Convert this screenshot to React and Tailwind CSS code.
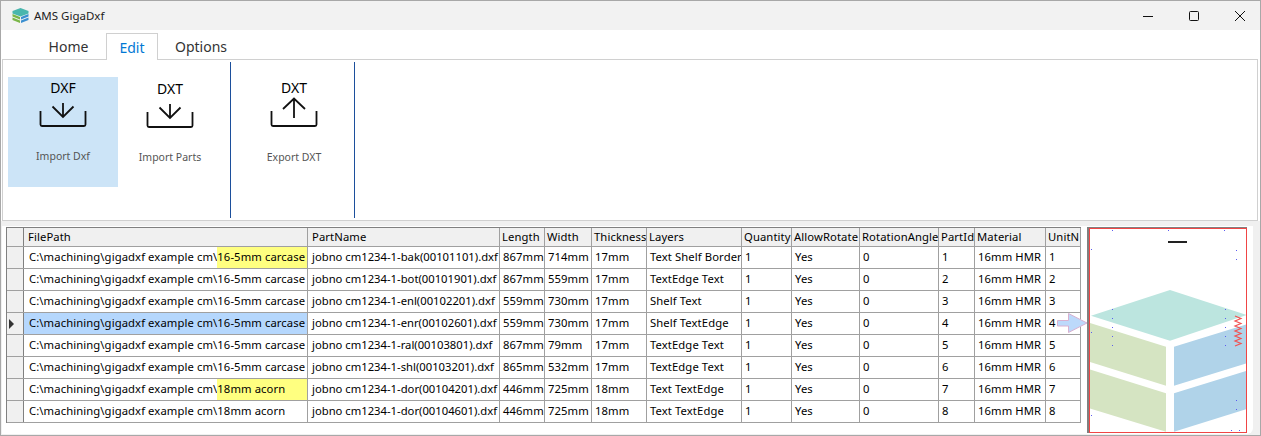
const COLS = [
  { key: 'path', label: 'FilePath', w: 'w-[284px]', pad: 'px-[4px]' },
  { key: 'name', label: 'PartName', w: 'w-[192px]', pad: 'px-[4px]' },
  { key: 'len', label: 'Length', w: 'w-[45px]' },
  { key: 'wid', label: 'Width', w: 'w-[47px]' },
  { key: 'thk', label: 'Thickness', w: 'w-[55px]' },
  { key: 'lay', label: 'Layers', w: 'w-[95px]' },
  { key: 'qty', label: 'Quantity', w: 'w-[50px]' },
  { key: 'rot', label: 'AllowRotate', w: 'w-[68px]' },
  { key: 'ang', label: 'RotationAngle', w: 'w-[79px]' },
  { key: 'pid', label: 'PartId', w: 'w-[36px]' },
  { key: 'mat', label: 'Material', w: 'w-[71px]' },
  { key: 'unit', label: 'UnitN', w: 'w-[35px]' },
];

const PREFIX = 'C:\\machining\\gigadxf example cm\\';

const ROWS = [
  { dir: '16-5mm carcase', mark: true, name: 'bak(00101101)', len: 867, wid: 714, thk: 17, lay: 'Text Shelf Border' },
  { dir: '16-5mm carcase', name: 'bot(00101901)', len: 867, wid: 559, thk: 17, lay: 'TextEdge Text' },
  { dir: '16-5mm carcase', name: 'enl(00102201)', len: 559, wid: 730, thk: 17, lay: 'Shelf Text' },
  { dir: '16-5mm carcase', sel: true, name: 'enr(00102601)', len: 559, wid: 730, thk: 17, lay: 'Shelf TextEdge' },
  { dir: '16-5mm carcase', name: 'ral(00103801)', len: 867, wid: 79, thk: 17, lay: 'TextEdge Text' },
  { dir: '16-5mm carcase', name: 'shl(00103201)', len: 865, wid: 532, thk: 17, lay: 'TextEdge Text' },
  { dir: '18mm acorn', mark: true, name: 'dor(00104201)', len: 446, wid: 725, thk: 18, lay: 'Text TextEdge' },
  { dir: '18mm acorn', name: 'dor(00104601)', len: 446, wid: 725, thk: 18, lay: 'Text TextEdge' },
];

// blue anchor points on the sheet preview, in page pixels
const DOTS = [
  [1112, 230], [1168, 230], [1224, 230], [1091, 249], [1236, 250], [1236, 259],
  [1112, 309], [1112, 318], [1112, 327], [1112, 336], [1112, 345],
  [1225, 309], [1225, 318], [1225, 327], [1225, 336], [1225, 345],
  [1091, 332], [1236, 400], [1236, 409], [1091, 415], [1231, 430], [1239, 430],
];

function TrayIcon({ label, up }) {
  return (
    <div className="flex flex-col items-center">
      <span className="text-[14px] leading-[16px] text-black">{label}</span>
      <svg className="block" width="48" height="32" viewBox="0 0 48 32" fill="none" stroke="#111" strokeWidth="1.8">
        <path d="M1.500 15v13.500a1.500 1.500 0 0 0 1.500 1.500h42a1.500 1.500 0 0 0 1.500-1.500V15" />
        {up ? <path d="M24 22V3M13 13L24 2.500 35 13" /> : <path d="M24 7v14M13.500 10.500L24 21l10.500-10.500" />}
      </svg>
    </div>
  );
}

function RibbonButton({ label, icon, up, active, w, box = 'pt-[3px]', gap = 'mt-[21px]' }) {
  return (
    <div className={`${w} ${box} h-[110px] flex flex-col items-center ${active ? 'bg-[#cce4f7]' : ''}`}>
      <TrayIcon label={icon} up={up} />
      <span className={`${gap} text-[10.5px] leading-[14px] text-[#555]`}>{label}</span>
    </div>
  );
}

function Cell({ w, pad = 'px-[3px]', children }) {
  return (
    <div className={`${w} ${pad} shrink-0 h-full border-r border-[#a0a0a0] flex items-center overflow-hidden whitespace-nowrap`}>
      {children}
    </div>
  );
}

function PathCell({ row }) {
  const bg = row.sel ? 'bg-[#b5d7fd]' : '';
  return (
    <div className={`w-[284px] shrink-0 h-full border-r border-[#a0a0a0] flex whitespace-nowrap ${bg}`}>
      <span className="pl-[5px] flex items-center">{PREFIX}</span>
      <span className={`flex-1 flex items-center ${row.mark ? 'bg-[#ffff80]' : ''}`}>{row.dir}</span>
    </div>
  );
}

function PreviewPanel() {
  return (
    <svg className="block" width="156" height="203" viewBox="1090 229 156 203">
      <polygon points="1091,315.700 1170,290 1247,315 1170,340.700" fill="#bce5df" />
      <polygon points="1089,322.700 1166,346.700 1166,385.700 1089,361.700" fill="#d5e4c2" />
      <polygon points="1089,369.300 1166,393.300 1166,431.700 1089,408.300" fill="#d5e4c2" />
      <polygon points="1174,346.700 1247,324.300 1247,363.300 1174,385.700" fill="#b0d3e9" />
      <polygon points="1174,393.300 1247,370.700 1247,409 1174,431.700" fill="#b0d3e9" />
      <path d="M1235 316l6 2.500-6 2.500 6 2.500-6 2.500 6 2.500-6 2.500 6 2.500-6 2.500 6 2.500-6 2.500 6 2.500-6 2.500" fill="none" stroke="#f25050" strokeWidth="1.200" />
      <rect x="1168" y="241" width="19" height="2" fill="#222" />
      {DOTS.map(([x, y]) => (
        <rect key={`${x}-${y}`} x={x} y={y} width="1" height="1" fill="#5c5cf0" />
      ))}
    </svg>
  );
}

export default function App() {
  return (
    <div className="w-[1261px] h-[436px] bg-[#f0f0f0] border border-[#a8a8a8] flex flex-col overflow-hidden font-['Noto_Sans',sans-serif] text-[11.25px] text-black">
      <div className="h-[29px] shrink-0 bg-[#f2f2f2] flex items-center pl-[11px]">
        <svg width="17" height="15" viewBox="0 0 17 15">
          <path d="M8.500 0L16.500 3v2.500L8.500 8.500.5 5.500V3z" fill="#49b6ad" />
          <path d="M.5 6l7.500 3v2.500L.5 8.500z" fill="#7ab648" />
          <path d="M16.500 6L9 9v2.500l7.500-3z" fill="#3b8fd0" />
          <path d="M.5 9.500l7.500 3V15L.5 12z" fill="#7ab648" />
          <path d="M16.500 9.500L9 12.500V15l7.500-3z" fill="#3b8fd0" />
        </svg>
        <span className="ml-[5px] text-[11.5px] text-[#222]">AMS GigaDxf</span>
        <div className="ml-auto flex items-center mr-[15px] gap-[36px]">
          <svg width="10" height="10" viewBox="0 0 10 10" stroke="#111" fill="none">
            <path d="M0 5.500h10" />
          </svg>
          <svg width="10" height="10" viewBox="0 0 10 10" stroke="#111" fill="none">
            <rect x=".5" y=".5" width="9" height="9" rx="1" />
          </svg>
          <svg width="10" height="10" viewBox="0 0 10 10" stroke="#111" fill="none">
            <path d="M0 0l10 10M10 0L0 10" />
          </svg>
        </div>
      </div>

      <div className="bg-white flex flex-col h-[191px] shrink-0 pl-[1px]">
        <div className="h-[29px] shrink-0 flex items-end pl-[29px] text-[14px] text-[#333]">
          <div className="w-[75px] h-[26px] flex items-center justify-center">Home</div>
          <div className="w-[52px] h-[27px] border border-b-0 border-[#d0d0d0] flex items-center justify-center text-[#0078d4] bg-white relative -mb-px z-10">Edit</div>
          <div className="w-[68px] ml-[9px] h-[26px] flex items-center justify-center">Options</div>
        </div>
        <div className="h-[162px] mr-[2px] border border-[#d0d0d0] flex pl-[5px] pt-[2px]">
          <div className="flex pt-[15px]">
            <RibbonButton label="Import Dxf" icon="DXF" active w="w-[110px]" />
            <RibbonButton label="Import Parts" icon="DXT" w="w-[104px]" box="pt-[4px]" />
          </div>
          <div className="w-px h-[156px] bg-[#1c4f9c] ml-[8px]" />
          <div className="flex pt-[15px]">
            <RibbonButton label="Export DXT" icon="DXT" up w="w-[123px]" box="pt-[3px] pl-[3px]" gap="mt-[22px]" />
          </div>
          <div className="w-px h-[156px] bg-[#1c4f9c]" />
        </div>
      </div>

      <div className="h-[5px] shrink-0 bg-[#f0f0f0]" />

      <div className="flex-1 bg-white ml-[1px] mr-[7px] mb-[1px] rounded-br-md flex items-start pl-[4px] pt-[1px]">
        <div className="w-fit border-t border-l border-[#808080] tracking-[0.1px]">
          <div className="flex h-[19px] bg-[#f0f0f0] border-b border-[#a0a0a0]">
            <div className="w-[17px] shrink-0 border-r border-[#808080]" />
            {COLS.map((c) => (
              <Cell key={c.key} w={c.w} pad={c.pad || 'px-[2px]'}>{c.label}</Cell>
            ))}
          </div>
          {ROWS.map((r, i) => (
            <div key={i} className="flex h-[22px] border-b border-[#a0a0a0]">
              <div className="w-[17px] shrink-0 bg-[#f0f0f0] border-r border-[#808080] flex items-center pl-[2px]">
                {r.sel && <div className="w-0 h-0 border-y-[5px] border-y-transparent border-l-[5px] border-l-[#333]" />}
              </div>
              <PathCell row={r} />
              <Cell w="w-[192px]" pad="px-[4px] tracking-normal">jobno cm1234-1-{r.name}.dxf</Cell>
              <Cell w="w-[45px]">{r.len}mm</Cell>
              <Cell w="w-[47px]">{r.wid}mm</Cell>
              <Cell w="w-[55px]">{r.thk}mm</Cell>
              <Cell w="w-[95px]">{r.lay}</Cell>
              <Cell w="w-[50px]">1</Cell>
              <Cell w="w-[68px]">Yes</Cell>
              <Cell w="w-[79px]">0</Cell>
              <Cell w="w-[36px]">{i + 1}</Cell>
              <Cell w="w-[71px]">16mm HMR</Cell>
              <Cell w="w-[35px]">{i + 1}</Cell>
            </div>
          ))}
        </div>
        <div className="ml-[6px] border-t border-l-2 border-[#808080] bg-white">
          <div className="border border-[#f04545]">
            <PreviewPanel />
          </div>
        </div>
        <svg className="absolute left-[1057px] top-[312px]" width="31" height="22" viewBox="1057 312 31 22">
          <path d="M1057.500 320.500H1068.500V313.500L1087 323 1068.500 332.500V326H1057.500z" fill="#bcd9fb" stroke="#d8b0d0" />
        </svg>
      </div>
    </div>
  );
}
